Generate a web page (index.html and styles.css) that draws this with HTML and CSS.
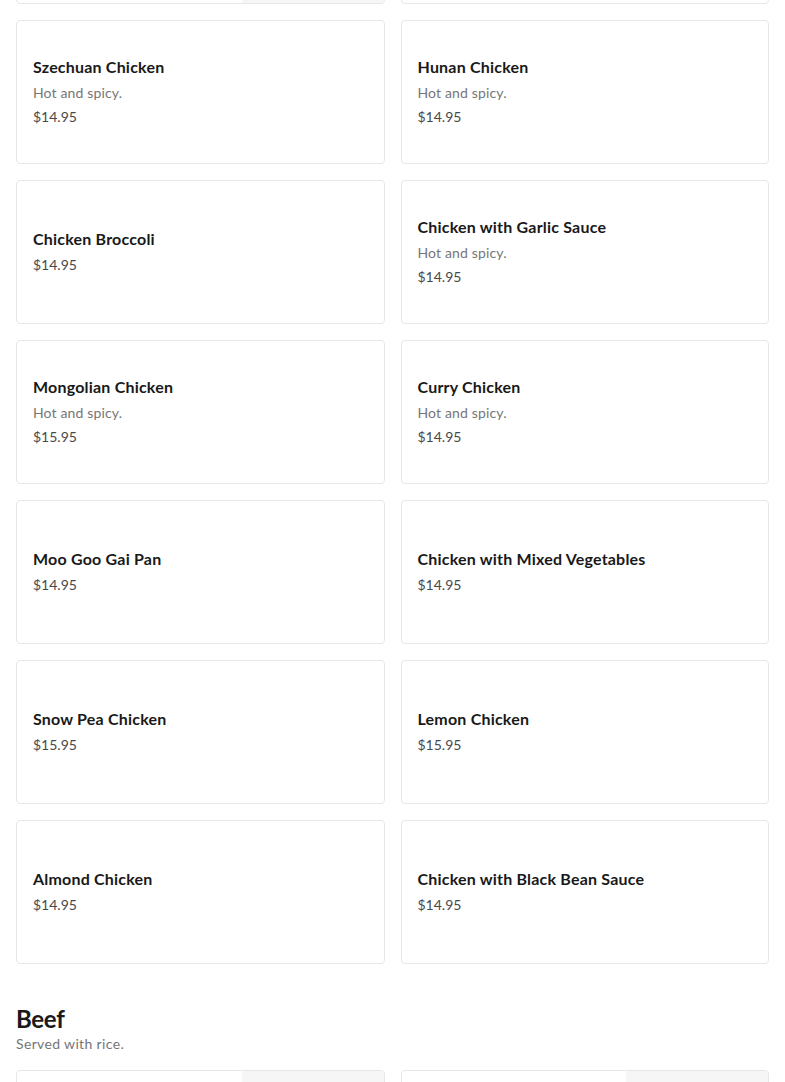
FILE: index.html
```html
<!DOCTYPE html>
<html lang="en">
<head>
<meta charset="utf-8">
<title>Menu</title>
<link rel="stylesheet" href="styles.css">
</head>
<body>
<main class="menu">
  <section class="section section-first">
    <div class="grid">
      <div class="card has-image">
        <div class="info"></div>
        <div class="thumb"></div>
      </div>
      <div class="card">
        <div class="info"></div>
      </div>
      <div class="card">
        <div class="info">
          <div class="name">Szechuan Chicken</div>
          <div class="desc">Hot and spicy.</div>
          <div class="price">$14.95</div>
        </div>
      </div>
      <div class="card">
        <div class="info">
          <div class="name">Hunan Chicken</div>
          <div class="desc">Hot and spicy.</div>
          <div class="price">$14.95</div>
        </div>
      </div>
      <div class="card">
        <div class="info">
          <div class="name">Chicken Broccoli</div>
          <div class="price">$14.95</div>
        </div>
      </div>
      <div class="card">
        <div class="info">
          <div class="name">Chicken with Garlic Sauce</div>
          <div class="desc">Hot and spicy.</div>
          <div class="price">$14.95</div>
        </div>
      </div>
      <div class="card">
        <div class="info">
          <div class="name">Mongolian Chicken</div>
          <div class="desc">Hot and spicy.</div>
          <div class="price">$15.95</div>
        </div>
      </div>
      <div class="card">
        <div class="info">
          <div class="name">Curry Chicken</div>
          <div class="desc">Hot and spicy.</div>
          <div class="price">$14.95</div>
        </div>
      </div>
      <div class="card">
        <div class="info">
          <div class="name">Moo Goo Gai Pan</div>
          <div class="price">$14.95</div>
        </div>
      </div>
      <div class="card">
        <div class="info">
          <div class="name">Chicken with Mixed Vegetables</div>
          <div class="price">$14.95</div>
        </div>
      </div>
      <div class="card">
        <div class="info">
          <div class="name">Snow Pea Chicken</div>
          <div class="price">$15.95</div>
        </div>
      </div>
      <div class="card">
        <div class="info">
          <div class="name">Lemon Chicken</div>
          <div class="price">$15.95</div>
        </div>
      </div>
      <div class="card">
        <div class="info">
          <div class="name">Almond Chicken</div>
          <div class="price">$14.95</div>
        </div>
      </div>
      <div class="card">
        <div class="info">
          <div class="name">Chicken with Black Bean Sauce</div>
          <div class="price">$14.95</div>
        </div>
      </div>
    </div>
  </section>

  <section class="section">
    <h2 class="section-title">Beef</h2>
    <p class="section-sub">Served with rice.</p>
    <div class="grid">
      <div class="card has-image">
        <div class="info"></div>
        <div class="thumb"></div>
      </div>
      <div class="card has-image">
        <div class="info"></div>
        <div class="thumb"></div>
      </div>
    </div>
  </section>
</main>
</body>
</html>
```

FILE: styles.css
```css
html, body {
  margin: 0;
  padding: 0;
  background: #ffffff;
}

body {
  font-family: Lato, "Liberation Sans", sans-serif;
  color: #191919;
  overflow: hidden;
}

.menu {
  padding: 0 16px;
  margin-top: -140px;
}

.section + .section {
  margin-top: 40px;
}

.section-title {
  margin: 0;
  font-size: 24px;
  line-height: 30px;
  font-weight: 700;
  color: #191919;
  letter-spacing: -0.3px;
}

.section-sub {
  margin: 0 0 16px;
  font-size: 14px;
  line-height: 20px;
  color: #767676;
  letter-spacing: 0.35px;
}

.grid {
  display: grid;
  grid-template-columns: 1fr 1fr;
  gap: 16px;
}

.card {
  box-sizing: border-box;
  height: 144px;
  border: 1px solid #e7e7e7;
  border-radius: 4px;
  display: flex;
  align-items: center;
  padding-left: 16px;
  overflow: hidden;
  background: #ffffff;
}

.info {
  flex: 1;
  min-width: 0;
  padding-right: 16px;
}

.name {
  font-size: 16px;
  line-height: 24px;
  font-weight: 700;
  color: #191919;
  letter-spacing: 0.2px;
}

.desc {
  margin-top: 4px;
  font-size: 14px;
  line-height: 20px;
  color: #767676;
  letter-spacing: 0.15px;
}

.price {
  margin-top: 2px;
  font-size: 14px;
  line-height: 24px;
  color: #494949;
}

.thumb {
  width: 142px;
  height: 142px;
  flex: none;
  background: #f6f6f6;
}
```
